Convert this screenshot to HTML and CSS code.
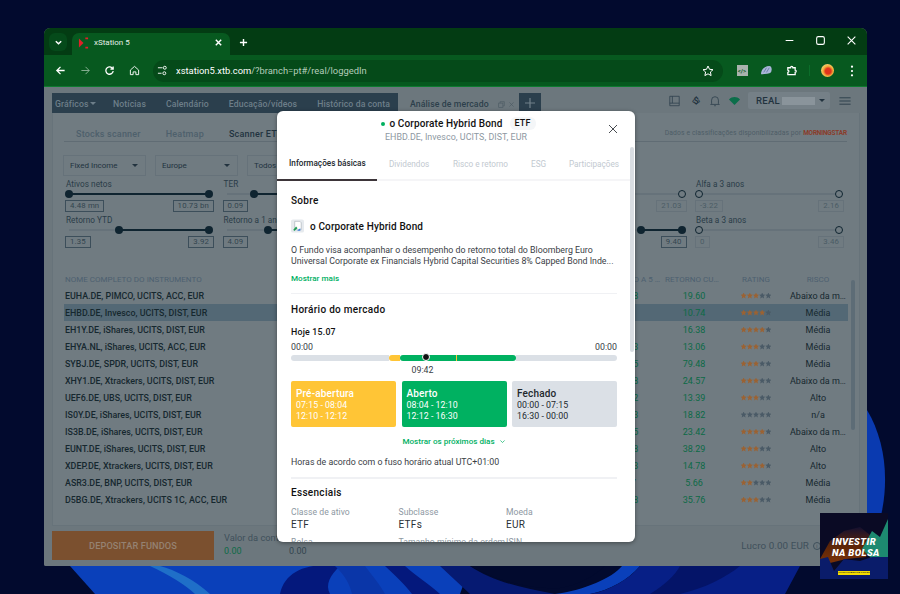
FILE: index.html
```html
<!DOCTYPE html>
<html lang="pt">
<head>
<meta charset="utf-8">
<title>xStation 5</title>
<link rel="stylesheet" href="styles.css">
</head>
<body>
<svg class="wallpaper" viewBox="0 0 900 594" preserveAspectRatio="none">
  <rect width="900" height="594" fill="#020a2e"/>
  <path d="M70 566 L95 594 L460 594 L470 566Z" fill="#0a40ba"/>
  <path d="M280 594 C285 570 310 562 340 566 C330 575 325 585 330 594Z" fill="#04187c"/>
  <path d="M335 566 C345 575 350 585 352 594 L385 594 C380 585 372 575 365 566Z" fill="#0a36a8"/>
  <path d="M385 566 C395 575 405 585 412 594 L440 594 C430 585 415 575 405 566Z" fill="#04187c"/>
  <path d="M440 566 L470 566 C490 580 520 588 555 594 L470 594Z" fill="#061a72"/>
  <path d="M470 566 C495 580 530 590 560 588 C580 585 595 575 605 566Z" fill="#020a2e"/>
  <path d="M555 594 C585 590 612 578 622 566 L640 566 C628 580 610 590 590 594Z" fill="#0a40ba"/>
  <path d="M590 594 C612 590 630 578 640 566 L800 566 L785 594Z" fill="#071f86"/>
  <path d="M680 566 L740 566 C725 578 705 588 680 594 L650 594 C665 585 675 575 680 566Z" fill="#041468"/>
  <path d="M867 410 C885 440 890 480 880 520 L867 566Z" fill="#0a3ab0"/>
  <path d="M150 566 C170 575 185 585 195 594 L210 594 C195 580 175 570 160 566Z" fill="#1f6fc8"/>
</svg>

<div class="window">
  <div class="titlebar">
    <span class="tabmenu"><svg viewBox="0 0 10 10" class="ico8"><path d="M2 3.5 5 6.5 8 3.5" class="st2"/></svg></span>
    <div class="tab">
      <svg viewBox="0 0 12 12" class="favicon"><path d="M1 1 6 6 1 11Z" fill="#e02028"/><path d="M8 1h3M8 11h3" stroke="#e02028" stroke-width="2"/></svg>
      <span class="tabtitle">xStation 5</span>
      <svg viewBox="0 0 10 10" class="ico8 tabclose"><path d="M2 2 8 8M8 2 2 8" class="st2"/></svg>
    </div>
    <svg viewBox="0 0 10 10" class="newtab"><path d="M5 1V9M1 5H9" class="st2"/></svg>
    <div class="winctrl">
      <svg viewBox="0 0 10 10" class="ico10"><path d="M1.5 5H8.5" class="st1"/></svg>
      <svg viewBox="0 0 10 10" class="ico10"><rect x="1.5" y="1.5" width="7" height="7" rx="1.5" class="st1"/></svg>
      <svg viewBox="0 0 10 10" class="ico10"><path d="M1.5 1.5 8.5 8.5M8.5 1.5 1.5 8.5" class="st1"/></svg>
    </div>
  </div>

  <div class="toolbar">
    <svg viewBox="0 0 12 12" class="navico"><path d="M10.5 6H2M6 2 2 6 6 10" class="st15"/></svg>
    <svg viewBox="0 0 12 12" class="navico dim"><path d="M1.5 6H10M6 2 10 6 6 10" class="st1"/></svg>
    <svg viewBox="0 0 12 12" class="navico"><path d="M10 6.5A4 4 0 1 1 8.8 3.2L10 4.4M10 1.5V4.5H7" class="st15"/></svg>
    <svg viewBox="0 0 12 12" class="navico"><path d="M1.5 5.5 6 1.5 10.5 5.5V10.5H7.5V7.5H4.5V10.5H1.5Z" class="st1"/></svg>
    <div class="omnibox">
      <svg viewBox="0 0 12 12" class="tune"><path d="M1 3H6M1 9H5" class="st1"/><circle cx="8.5" cy="3" r="1.6" class="st1"/><circle cx="8" cy="9" r="1.6" class="st1"/></svg>
      <span class="url"><b>xstation5.xtb.com</b>/?branch=pt#/real/loggedIn</span>
      <svg viewBox="0 0 12 12" class="star"><path d="M6 1 7.5 4.3 11 4.7 8.4 7 9.1 10.6 6 8.8 2.9 10.6 3.6 7 1 4.7 4.5 4.3Z" class="st1"/></svg>
    </div>
    <div class="exts">
      <span class="ext-dev">&lt;/&gt;</span>
      <svg viewBox="0 0 14 12" class="ext2"><path d="M1 10C1 5 5 1 10 1 13 1 13 5 12 8 10 10 5 10 1 10Z" fill="#a9b6d8"/><path d="M4 8 7 3M7 8 10 3" stroke="#6a7aa8"/></svg>
      <svg viewBox="0 0 12 12" class="navico"><path d="M2 3H5C5 1 7.5 1 7.5 3H10V5.5C11.5 5.5 11.5 8 10 8V10.5H2V8C3.5 8 3.5 5.5 2 5.5Z" class="st15"/></svg>
      <span class="extsep"></span>
      <span class="avatar"></span>
      <svg viewBox="0 0 4 14" class="dots"><circle cx="2" cy="2" r="1.3"/><circle cx="2" cy="7" r="1.3"/><circle cx="2" cy="12" r="1.3"/></svg>
    </div>
  </div>

  <div class="app">
    <div class="appbar">
      <nav class="mainnav">
        <span class="first">Gráficos<i class="caret"></i></span>
        <span>Notícias</span>
        <span>Calendário</span>
        <span>Educação/vídeos</span>
        <span>Histórico da conta</span>
      </nav>
      <div class="activetab">Análise de mercado
        <svg viewBox="0 0 10 10" class="tabmini"><rect x="1" y="3" width="6" height="6" class="thin"/><path d="M3 3V1H9V7H7" class="thin"/></svg>
        <svg viewBox="0 0 10 10" class="tabmini"><path d="M2 2 8 8M8 2 2 8" class="thin"/></svg>
      </div>
      <div class="addtab"><svg viewBox="0 0 10 10"><path d="M5 0V10M0 5H10" stroke="#71808a" stroke-width="1.2"/></svg></div>
      <div class="apptools">
        <svg viewBox="0 0 14 14" class="tool"><path d="M1.5 1.5H12.5V12.5H1.5ZM1.5 9.5H12.5M4.5 1.5V9.5" class="thin"/></svg>
        <span class="dollar">‹$›</span>
        <svg viewBox="0 0 14 14" class="tool"><path d="M3 10V6A4 4 0 0 1 11 6V10L12 11H2ZM6 12.5H8" class="thin"/></svg>
        <svg viewBox="0 0 14 10" class="wifi"><path d="M7 10 0 3C4-1 10-1 14 3Z"/></svg>
        <div class="account"><b>REAL</b><span class="blur"></span><i class="caret dark"></i></div>
        <svg viewBox="0 0 14 10" class="burger"><path d="M0 1H14M0 5H14M0 9H14"/></svg>
      </div>
    </div>

    <section class="panel">
      <div class="subtabs">
        <span class="sub">Stocks scanner</span>
        <span class="sub">Heatmap</span>
        <span class="sub on">Scanner ETF</span>
        <span class="credit">Dados e classificações disponibilizadas por <em class="mstar">MORNINGSTAR</em></span>
      </div>

      <div class="filters">
        <div class="select"><span>Fixed Income</span><i class="caret dark"></i></div>
        <div class="select"><span>Europe</span><i class="caret dark"></i></div>
        <div class="select"><span>Todos</span><i class="caret dark"></i></div>
      </div>

      <div class="sliders">
        <div class="sl"><label>Ativos netos</label><div class="track"><i class="fill f0"></i><u class="h l0"></u><u class="h r0"></u></div><div class="vals"><span>4.48 mn</span><span>10.73 bn</span></div></div>
        <div class="sl"><label>TER</label><div class="track"><i class="fill f1"></i><u class="h l1"></u><u class="h r0"></u></div><div class="vals"><span>0.09</span></div></div>
        <div class="sl"><label></label><div class="track"></div></div>
        <div class="sl off"><label></label><div class="track"><u class="h r0"></u></div><div class="vals right"><span>21.03</span></div></div>
        <div class="sl off"><label>Alfa a 3 anos</label><div class="track"><u class="h l0"></u><u class="h r0"></u></div><div class="vals"><span>-3.22</span><span>2.16</span></div></div>
        <div class="sl"><label>Retorno YTD</label><div class="track"><i class="fill f2"></i><u class="h l2"></u><u class="h r0"></u></div><div class="vals"><span>1.35</span><span>3.92</span></div></div>
        <div class="sl"><label>Retorno a 1 ano</label><div class="track"><i class="fill f3"></i><u class="h l3"></u><u class="h r0"></u></div><div class="vals"><span>4.09</span></div></div>
        <div class="sl"><label></label><div class="track"></div></div>
        <div class="sl"><label></label><div class="track"><i class="fill f4"></i><u class="h l4"></u><u class="h r0"></u></div><div class="vals right"><span>9.40</span></div></div>
        <div class="sl off"><label>Beta a 3 anos</label><div class="track"><u class="h l0"></u><u class="h r0"></u></div><div class="vals"><span>0</span><span>3.46</span></div></div>
      </div>

      <div class="tablewrap">
        <div class="row head"><span>NOME COMPLETO DO INSTRUMENTO</span><span class="c">RETORNO A 5 ANOS</span><span class="c">RETORNO CUMULATIVO</span><span class="c">RATING</span><span class="c">RISCO</span></div>
        <div class="row"><span class="n">EUHA.DE, PIMCO, UCITS, ACC, EUR</span><span class="g">15.78</span><span class="g">19.60</span><span class="stars r3"><i></i><i></i><i></i><i></i><i></i></span><span class="k">Abaixo da média</span></div>
        <div class="row sel"><span class="n">EHBD.DE, Invesco, UCITS, DIST, EUR</span><span class="g"></span><span class="g">10.74</span><span class="stars r4"><i></i><i></i><i></i><i></i><i></i></span><span class="k">Média</span></div>
        <div class="row"><span class="n">EH1Y.DE, iShares, UCITS, DIST, EUR</span><span class="g"></span><span class="g">16.38</span><span class="stars r4"><i></i><i></i><i></i><i></i><i></i></span><span class="k">Média</span></div>
        <div class="row"><span class="n">EHYA.NL, iShares, UCITS, ACC, EUR</span><span class="g">11.23</span><span class="g">13.06</span><span class="stars r3"><i></i><i></i><i></i><i></i><i></i></span><span class="k">Média</span></div>
        <div class="row"><span class="n">SYBJ.DE, SPDR, UCITS, DIST, EUR</span><span class="g">20.15</span><span class="g">79.48</span><span class="stars r3"><i></i><i></i><i></i><i></i><i></i></span><span class="k">Média</span></div>
        <div class="row"><span class="n">XHY1.DE, Xtrackers, UCITS, DIST, EUR</span><span class="g">18.38</span><span class="g">24.57</span><span class="stars r3"><i></i><i></i><i></i><i></i><i></i></span><span class="k">Abaixo da média</span></div>
        <div class="row"><span class="n">UEF6.DE, UBS, UCITS, DIST, EUR</span><span class="g">10.12</span><span class="g">13.39</span><span class="stars r3"><i></i><i></i><i></i><i></i><i></i></span><span class="k">Alto</span></div>
        <div class="row"><span class="n">IS0Y.DE, iShares, UCITS, DIST, EUR</span><span class="g">14.23</span><span class="g">18.82</span><span class="stars r0"><i></i><i></i><i></i><i></i><i></i></span><span class="k">n/a</span></div>
        <div class="row"><span class="n">IS3B.DE, iShares, UCITS, DIST, EUR</span><span class="g">17.05</span><span class="g">23.42</span><span class="stars r4"><i></i><i></i><i></i><i></i><i></i></span><span class="k">Abaixo da média</span></div>
        <div class="row"><span class="n">EUNT.DE, iShares, UCITS, DIST, EUR</span><span class="g">25.68</span><span class="g">38.29</span><span class="stars r3"><i></i><i></i><i></i><i></i><i></i></span><span class="k">Alto</span></div>
        <div class="row"><span class="n">XDEP.DE, Xtrackers, UCITS, DIST, EUR</span><span class="g">11.43</span><span class="g">14.78</span><span class="stars r4"><i></i><i></i><i></i><i></i><i></i></span><span class="k">Alto</span></div>
        <div class="row"><span class="n">ASR3.DE, BNP, UCITS, DIST, EUR</span><span class="g">4.17</span><span class="g">5.66</span><span class="stars r2"><i></i><i></i><i></i><i></i><i></i></span><span class="k">Média</span></div>
        <div class="row"><span class="n">D5BG.DE, Xtrackers, UCITS 1C, ACC, EUR</span><span class="g">24.18</span><span class="g">35.76</span><span class="stars r3"><i></i><i></i><i></i><i></i><i></i></span><span class="k">Média</span></div>
        <div class="vscroll"></div>
      </div>
    </section>

    <footer class="bottom">
      <div class="deposit">DEPOSITAR FUNDOS</div>
      <div class="stat"><small>Valor da conta</small><b>0.00</b></div>
      <div class="stat second"><small>&nbsp;</small><b class="grey">0.00</b></div>
      <div class="profit">Lucro 0.00 EUR <i class="info">i</i></div>
    </footer>
  </div>

  <div class="modal">
    <header class="mhead">
      <div class="mtitle"><i class="dot"></i>o Corporate Hybrid Bond<span class="etf">ETF</span></div>
      <div class="msub">EHBD.DE, Invesco, UCITS, DIST, EUR</div>
      <svg viewBox="0 0 10 10" class="mclose"><path d="M1 1 9 9M9 1 1 9"/></svg>
    </header>
    <div class="mtabs">
      <span class="mt on">Informações básicas</span>
      <span class="mt">Dividendos</span>
      <span class="mt">Risco e retorno</span>
      <span class="mt">ESG</span>
      <span class="mt">Participações</span>
    </div>
    <div class="mbody">
      <h2>Sobre</h2>
      <div class="fund">
        <svg viewBox="0 0 14 14" class="flogo"><rect width="14" height="14" rx="2" fill="#e6eaee"/><path d="M4 2H9.5L11 3.5V11H4Z" fill="#fff" stroke="#9aa4ad" stroke-width=".6"/><path d="M2.5 11 5.5 7.5 7 9.5 3.5 12.5Z" fill="#1f9d55"/><path d="M7 11.5 10 9.5V12H7Z" fill="#3b7dd8"/></svg>
        <span>o Corporate Hybrid Bond</span>
      </div>
      <p class="desc">O Fundo visa acompanhar o desempenho do retorno total do Bloomberg Euro Universal Corporate ex Financials Hybrid Capital Securities 8% Capped Bond Inde...</p>
      <div class="more">Mostrar mais</div>
      <hr class="hr1">
      <h2 class="h-market">Horário do mercado</h2>
      <div class="today">Hoje 15.07</div>
      <div class="ends"><span>00:00</span><span>00:00</span></div>
      <div class="bar">
        <i class="seg s-a"></i><i class="seg s-b"></i><i class="seg s-c"></i><i class="seg s-d"></i><i class="seg s-e"></i><i class="seg s-f"></i>
        <u class="pin"></u>
      </div>
      <div class="now">09:42</div>
      <div class="cards">
        <div class="card pre"><b>Pré-abertura</b><span>07:15 - 08:04</span><span>12:10 - 12:12</span></div>
        <div class="card open"><b>Aberto</b><span>08:04 - 12:10</span><span>12:12 - 16:30</span></div>
        <div class="card closed"><b>Fechado</b><span>00:00 - 07:15</span><span>16:30 - 00:00</span></div>
      </div>
      <div class="nextdays">Mostrar os próximos dias <svg viewBox="0 0 10 10"><path d="M2 3.5 5 6.5 8 3.5"/></svg></div>
      <div class="tz">Horas de acordo com o fuso horário atual UTC+01:00</div>
      <hr class="hr2">
      <h2 class="h-ess">Essenciais</h2>
      <div class="facts">
        <div><small>Classe de ativo</small><b>ETF</b></div>
        <div><small>Subclasse</small><b>ETFs</b></div>
        <div><small>Moeda</small><b>EUR</b></div>
        <div><small>Bolsa</small></div>
        <div><small>Tamanho mínimo da ordem</small></div>
        <div><small>ISIN</small></div>
      </div>
    </div>
    <div class="mscroll"></div>
  </div>
</div>

<aside class="promo">
  <svg viewBox="0 0 68 66" class="promobg" preserveAspectRatio="none">
    <defs><linearGradient id="burn" x1="0" y1="0" x2="0" y2="1"><stop offset="0" stop-color="#141030"/><stop offset=".5" stop-color="#5a2408"/><stop offset="1" stop-color="#7a3208"/></linearGradient></defs>
    <rect width="68" height="66" fill="#0a0a24"/>
    <path d="M0 46 10 28 24 18 40 14 50 22 46 44 26 46 10 50Z" fill="url(#burn)"/>
    <path d="M42 36 52 18 60 24 68 6V44L52 46Z" fill="#1d8a70"/>
    <path d="M0 46 8 44 14 58 24 46 40 48 52 44 68 44V66H0Z" fill="#0a1c6a"/>
  </svg>
  <div class="promotext">INVESTIR<br>NA BOLSA</div>
  <div class="promotag">INVESTIRNABOLSA.COM.BR</div>
</aside>
</body>
</html>
```

FILE: styles.css
```css
* { box-sizing: border-box; }
html, body { margin: 0; padding: 0; height: 100%; overflow: hidden; }
body { width: 900px; height: 594px; position: relative; background: #020a2e; font-family: Roboto, "Liberation Sans", sans-serif; }
.wallpaper { position: absolute; inset: 0; width: 900px; height: 594px; }
svg { display: block; flex: none; }
.st1, .st15, .st2 { fill: none; stroke: #fff; }
.st1 { stroke-width: 1; }
.st15 { stroke-width: 1.4; }
.st2 { stroke-width: 1.6; }
.thin { fill: none; stroke: #2c3f4b; stroke-width: .9; }

.window { position: absolute; left: 44px; top: 28px; width: 823px; height: 538px; border-radius: 6px 6px 2px 2px; overflow: hidden; display: flex; flex-direction: column; background: #6c777d; }

.titlebar { height: 27px; background: #033c13; display: flex; align-items: flex-end; padding-left: 5px; flex: none; position: relative; }
.tabmenu { width: 18px; height: 18px; border-radius: 6px; background: #054a1a; display: flex; align-items: center; justify-content: center; margin-bottom: 4px; margin-right: 5px; }
.ico8 { width: 9px; height: 9px; }
.ico10 { width: 11px; height: 11px; }
.tab { width: 158px; height: 22px; background: #07591f; border-radius: 7px 7px 0 0; display: flex; align-items: center; padding: 0 7px 3px 6px; }
.favicon { width: 11px; height: 12px; margin-right: 5px; }
.tabtitle { color: #e6efe8; font-size: 8px; flex: 1; }
.newtab { width: 9px; height: 9px; margin: 0 0 8px 9px; }
.winctrl { margin-left: auto; display: flex; gap: 20px; padding-right: 10px; margin-bottom: 9px; }

.toolbar { height: 32px; background: #07591f; display: flex; align-items: center; padding-left: 11px; flex: none; border-bottom: 1px solid #0e7a30; }
.navico { width: 11px; height: 11px; margin-right: 13.5px; }
.navico.dim { opacity: .55; }
.omnibox { width: 570px; height: 22px; border-radius: 11px; background: #054a19; display: flex; align-items: center; padding: 0 9px 0 4px; }
.tune { width: 11px; height: 11px; margin-right: 8px; }
.url { font-size: 9.4px; color: #b4cdb9; flex: 1; letter-spacing: 0; white-space: nowrap; }
.url b { color: #fff; font-weight: 400; }
.star { width: 12px; height: 12px; }
.exts { display: flex; align-items: center; margin-left: 13.5px; }
.ext-dev { width: 11px; height: 11px; background: #a9b3ad; color: #07591f; font-size: 6px; line-height: 11px; text-align: center; font-weight: 700; margin-right: 12px; }
.ext2 { width: 13px; height: 11px; margin-right: 13.5px; }
.exts .navico { margin-right: 0; }
.extsep { width: 1px; height: 11px; background: #0b6e2a; margin: 0 11px 0 12px; }
.avatar { width: 13px; height: 13px; border-radius: 50%; background: radial-gradient(circle at 55% 55%, #e0341c 0 28%, #f2b23c 50%, #fbe6b8 100%); margin-right: 16px; }
.dots { width: 4px; height: 12px; fill: #fff; }

.app { flex: 1; min-height: 0; display: flex; flex-direction: column; padding: 6px 8px 6px 8px; background: #6c777d; }
.appbar { height: 20px; display: flex; align-items: stretch; flex: none; }
.mainnav { width: 346px; height: 20px; background: #2b3f4d; display: flex; align-items: center; color: #6d7e89; font-size: 8.7px; font-weight: 500; letter-spacing: .1px; padding: 2px 0 0 3px; gap: 20px; white-space: nowrap; }
.mainnav .first { width: 38px; }
.caret { display: inline-block; width: 0; height: 0; border-left: 3px solid transparent; border-right: 3px solid transparent; border-top: 3px solid #6d7e89; margin-left: 1px; vertical-align: 2px; }
.caret.dark { border-top-color: #22333f; }
.activetab { width: 121px; display: flex; align-items: center; color: #2c3f4b; font-size: 8.7px; font-weight: 500; padding: 2px 0 0 12px; gap: 3px; letter-spacing: .1px; white-space: nowrap; }
.tabmini { width: 7px; height: 7px; opacity: .5; }
.tabmini:first-of-type { margin-left: 6px; }
.addtab { width: 22px; background: #2b3f4d; display: flex; align-items: center; justify-content: center; }
.addtab svg { width: 10px; height: 10px; }
.apptools { flex: 1; display: flex; align-items: center; padding-left: 127px; margin-top: -5px; }
.tool { width: 12px; height: 12px; margin-right: 8px; }
.apptools .tool:first-child { width: 13px; margin-right: 8px; }
.dollar { color: #22333f; font-size: 9px; font-weight: 700; width: 13px; text-align: center; margin-right: 7px; letter-spacing: -1px; }
.wifi { width: 11px; height: 8px; fill: #0b6e4a; margin-right: 8px; }
.account { width: 82px; height: 17px; background: #758087; border-radius: 2px; display: flex; align-items: center; padding: 0 5px 0 8px; color: #22333f; font-size: 9.5px; letter-spacing: .3px; }
.account b { font-weight: 500; }
.blur { width: 33px; height: 8px; background: #8a949b; margin-left: 2px; }
.account .caret { margin-left: auto; }
.burger { width: 12px; height: 8px; margin-left: 9px; stroke: #2c3f4b; stroke-width: 1.2; fill: none; }

.panel { flex: 1; min-height: 0; background: #707b81; padding: 13px 12px 0 11px; margin-right: -1px; border: 1px solid #67737a; border-top: 0; position: relative; display: flex; flex-direction: column; }
.subtabs { display: flex; align-items: center; height: 16px; border-bottom: 1px solid #606c74; flex: none; padding-left: 12px; gap: 25px; font-size: 9px; font-weight: 500; color: #4e606c; letter-spacing: .2px; }
.sub { white-space: nowrap; }
.sub.on { color: #22333f; }
.credit { margin-left: auto; font-size: 6.8px; font-weight: 400; color: #4e5d67; letter-spacing: .1px; white-space: nowrap; display: flex; gap: 2px; margin-top: -2px; }
.mstar { font-style: normal; font-weight: 700; color: #8a3b2a; font-size: 6.5px; letter-spacing: -.2px; }
.filters { display: flex; gap: 9px; margin: 13px 0 0 -1px; flex: none; }
.select { width: 83px; height: 21px; border: 1px solid #66727a; display: flex; align-items: center; justify-content: space-between; padding: 0 7px 0 6px; font-size: 8px; color: #22333f; }
.sliders { display: grid; grid-template-columns: repeat(5, 143px); column-gap: 14.5px; margin: 3px 0 0 2px; flex: none; row-gap: 7px; }
.sl { height: 29px; position: relative; }
.sl label { display: block; font-size: 8.2px; line-height: 11px; height: 11px; color: #2a3c48; letter-spacing: .05px; white-space: nowrap; }
.track { height: 2px; margin: 3px 0 0 3px; background: #66727a; position: relative; }
.fill { position: absolute; top: 0; bottom: 0; right: 0; background: #0f2430; }
.f0 { left: 0; } .f1 { left: 27px; } .f2 { left: 50px; } .f3 { left: 41px; } .f4 { left: 99px; }
.h { position: absolute; top: -3px; width: 8px; height: 8px; border-radius: 50%; background: #0f2430; }
.l0 { left: -4px; } .r0 { right: -4px; } .l1 { left: 23px; } .l2 { left: 46px; } .l3 { left: 37px; } .l4 { left: 95px; }
.off .h { background: #707b81; border: 1.5px solid #0f2430; }
.vals { display: flex; justify-content: space-between; margin: 5px -5px 0 -1px; }
.vals.right { justify-content: flex-end; }
.vals span { height: 12px; padding: 0 4px; min-width: 13px; border: 1px solid #3c4e5a; font-size: 7.8px; line-height: 10px; color: #33454f; letter-spacing: .15px; text-align: center; white-space: nowrap; }
.off .vals span { border-color: #66727a; color: #4b5b65; }

.tablewrap { margin: 28px -1px 0 0; position: relative; flex: none; }
.row { display: grid; grid-template-columns: 537px 62px 62px 62px 62px; height: 17px; align-items: center; font-size: 8.9px; }
.row.head { height: 15px; color: #4d6070; font-size: 8px; letter-spacing: .02px; }
.row.head span { padding-left: 1px; white-space: nowrap; }
.row.head .c { text-align: center; overflow: hidden; text-overflow: ellipsis; padding: 0 2px; }
.n { color: #16282f; font-weight: 500; padding-left: 1px; }
.g { color: #0c6a46; text-align: center; font-size: 9px; }
.g:nth-child(2) { padding-right: 10px; }
.k { color: #16282f; text-align: center; overflow: hidden; white-space: nowrap; text-overflow: ellipsis; padding: 0 3px; font-size: 9px; }
.sel { background: #536875; }
.stars { display: flex; justify-content: center; gap: .2px; }
.stars i { width: 6px; height: 6px; background: #4a5a66; clip-path: polygon(50% 0, 65% 35%, 100% 38%, 74% 62%, 82% 100%, 50% 80%, 18% 100%, 26% 62%, 0 38%, 35% 35%); }
.r2 i:nth-child(-n+2), .r3 i:nth-child(-n+3), .r4 i:nth-child(-n+4) { background: #9b6232; }
.vscroll { position: absolute; right: -7px; top: 8px; width: 4px; height: 150px; border-radius: 2px; background: #5d6c76; }

.bottom { height: 29px; margin-top: 5px; flex: none; display: flex; align-items: center; }
.deposit { width: 162px; height: 29px; background: #7b502f; display: flex; align-items: center; justify-content: center; color: #958272; font-size: 9.2px; font-weight: 500; letter-spacing: .1px; }
.stat { margin-left: 10px; font-size: 9px; display: flex; flex-direction: column; gap: 3px; white-space: nowrap; width: 65px; margin-top: -2px; }
.stat.second { margin-left: 0; }
.stat small { font-size: 9.3px; color: #3f505b; line-height: 11px; }
.stat b { font-weight: 400; color: #0c6a46; line-height: 11px; }
.stat b.grey { color: #33454f; }
.profit { margin-left: auto; margin-right: 38px; color: #3f505b; font-size: 9.8px; letter-spacing: .1px; display: flex; align-items: center; gap: 4px; white-space: nowrap; }
.info { display: block; width: 8px; height: 8px; border: 1px solid #3f505b; border-radius: 50%; font-size: 5px; line-height: 6px; text-align: center; font-style: normal; }

.modal { position: absolute; left: 233px; top: 83px; width: 358px; height: 431px; background: #fff; border-radius: 6px; overflow: hidden; display: flex; flex-direction: column; box-shadow: 0 1px 4px rgba(0,0,0,.4); }
.mhead { height: 37px; flex: none; text-align: center; padding-top: 6px; position: relative; }
.mtitle { font-size: 10px; font-weight: 500; color: #111; letter-spacing: .13px; display: flex; align-items: center; justify-content: center; gap: 4px; line-height: 13px; padding-left: 5px; }
.dot { width: 4px; height: 4px; border-radius: 50%; background: #00b05f; }
.etf { font-size: 9px; font-weight: 500; padding: 0 5px; margin-left: 3px; background: #f4f6f8; border-radius: 6px; }
.msub { font-size: 8.9px; color: #8d98a2; margin-top: 1px; line-height: 12px; letter-spacing: .05px; }
.mclose { position: absolute; right: 17px; top: 13px; width: 10px; height: 10px; stroke: #33383d; stroke-width: .9; fill: none; }
.mtabs { height: 33px; flex: none; display: flex; border-bottom: 2px solid #f5f5f7; margin-right: 5px; }
.mt { display: flex; align-items: center; font-size: 8.2px; color: #c2c9d0; padding-left: 12px; margin-bottom: -2px; white-space: nowrap; padding-bottom: 2px; }
.mt:nth-child(1) { width: 100px; color: #22282d; font-weight: 500; border-bottom: 2px solid #3d3539; }
.mt:nth-child(2) { width: 64px; }
.mt:nth-child(3) { width: 78px; }
.mt:nth-child(4) { width: 38px; }
.mbody { padding: 13px 18px 0 14px; flex: 1; min-height: 0; font-size: 8.8px; color: #22282d; }
.mbody h2 { margin: 0; font-size: 10px; font-weight: 500; line-height: 14px; letter-spacing: .3px; color: #111; }
.fund { display: flex; align-items: center; gap: 6px; margin-top: 11px; font-size: 10px; font-weight: 500; color: #111; letter-spacing: .13px; height: 14px; }
.flogo { width: 13px; height: 14px; }
.desc { margin: 12px 0 0 0; font-size: 8.8px; line-height: 11px; color: #3a4046; }
.more { margin-top: 6px; color: #00b063; font-size: 8.1px; font-weight: 500; line-height: 11px; }
.mbody hr { border: 0; height: 1px; background: #f0f1f4; }
.mbody .hr1 { margin: 9px 0 0 0; }
.mbody .h-market { margin-top: 9px; }
.today { margin-top: 10px; font-weight: 500; font-size: 8.8px; line-height: 11px; letter-spacing: .2px; color: #111; }
.ends { display: flex; justify-content: space-between; margin-top: 4px; font-size: 8.8px; line-height: 11px; color: #3a4046; }
.bar { margin-top: 2px; height: 6px; position: relative; display: flex; border-radius: 3px; }
.seg { height: 6px; display: block; }
.s-a { width: 98px; background: #dbe0e6; border-radius: 3px 0 0 3px; }
.s-b { width: 11px; background: #ffc536; border-radius: 3px 0 0 3px; }
.s-c { width: 56px; background: #00b161; border-radius: 3px 0 0 3px; }
.s-d { width: 1px; background: #ffc536; }
.s-e { width: 59px; background: #00b161; border-radius: 0 3px 3px 0; }
.s-f { flex: 1; background: #dbe0e6; border-radius: 0 3px 3px 0; }
.pin { position: absolute; left: 131px; top: 0; width: 6px; height: 6px; border-radius: 50%; background: #111; border: 1px solid #fff; box-sizing: content-box; margin-top: -2px; }
.now { text-align: center; font-size: 8.8px; line-height: 11px; margin-top: 4px; padding-right: 63px; color: #3a4046; }
.cards { display: grid; grid-template-columns: 105px 105px 105px; column-gap: 5.5px; margin-top: 5px; }
.card { height: 46px; border-radius: 2px; padding: 7px 5px 0 5px; display: flex; flex-direction: column; font-size: 8.8px; line-height: 11px; color: #fff; letter-spacing: .05px; }
.card b { font-size: 10px; font-weight: 500; line-height: 12px; letter-spacing: .15px; }
.pre { background: #ffc536; }
.open { background: #00b161; }
.closed { background: #dbe0e6; color: #22282d; }
.nextdays { display: flex; justify-content: center; align-items: center; gap: 4px; margin-top: 9px; color: #00b063; font-size: 8.1px; font-weight: 500; line-height: 11px; }
.nextdays svg { width: 7px; height: 7px; stroke: #00b063; fill: none; }
.tz { margin-top: 10px; line-height: 11px; color: #3a4046; }
.mbody .hr2 { margin: 9px 0 0 0; height: 2px; }
.mbody .h-ess { margin-top: 7px; }
.facts { display: grid; grid-template-columns: 107.5px 107.5px 1fr; row-gap: 5px; margin-top: 6px; }
.facts div { display: flex; flex-direction: column; white-space: nowrap; }
.facts small { font-size: 8.6px; line-height: 12px; color: #8d98a2; letter-spacing: .05px; }
.facts b { font-size: 10px; font-weight: 400; line-height: 13px; color: #2a3036; letter-spacing: .3px; }
.mscroll { position: absolute; right: 1px; top: 36px; width: 4px; height: 205px; border-radius: 2px; background: #d9dde2; }

.promo { position: absolute; left: 820px; top: 513px; width: 68px; height: 66px; overflow: hidden; }
.promobg { position: absolute; inset: 0; width: 68px; height: 66px; }
.promotext { position: absolute; left: 12px; top: 23px; color: #fff; font-size: 9.5px; font-weight: 900; font-style: italic; line-height: 11px; letter-spacing: .4px; white-space: nowrap; }
.promotag { position: absolute; left: 18px; top: 58px; width: 32px; height: 4px; background: #f2dc00; color: #222; font-size: 2.5px; line-height: 4px; text-align: center; overflow: hidden; white-space: nowrap; }
```
